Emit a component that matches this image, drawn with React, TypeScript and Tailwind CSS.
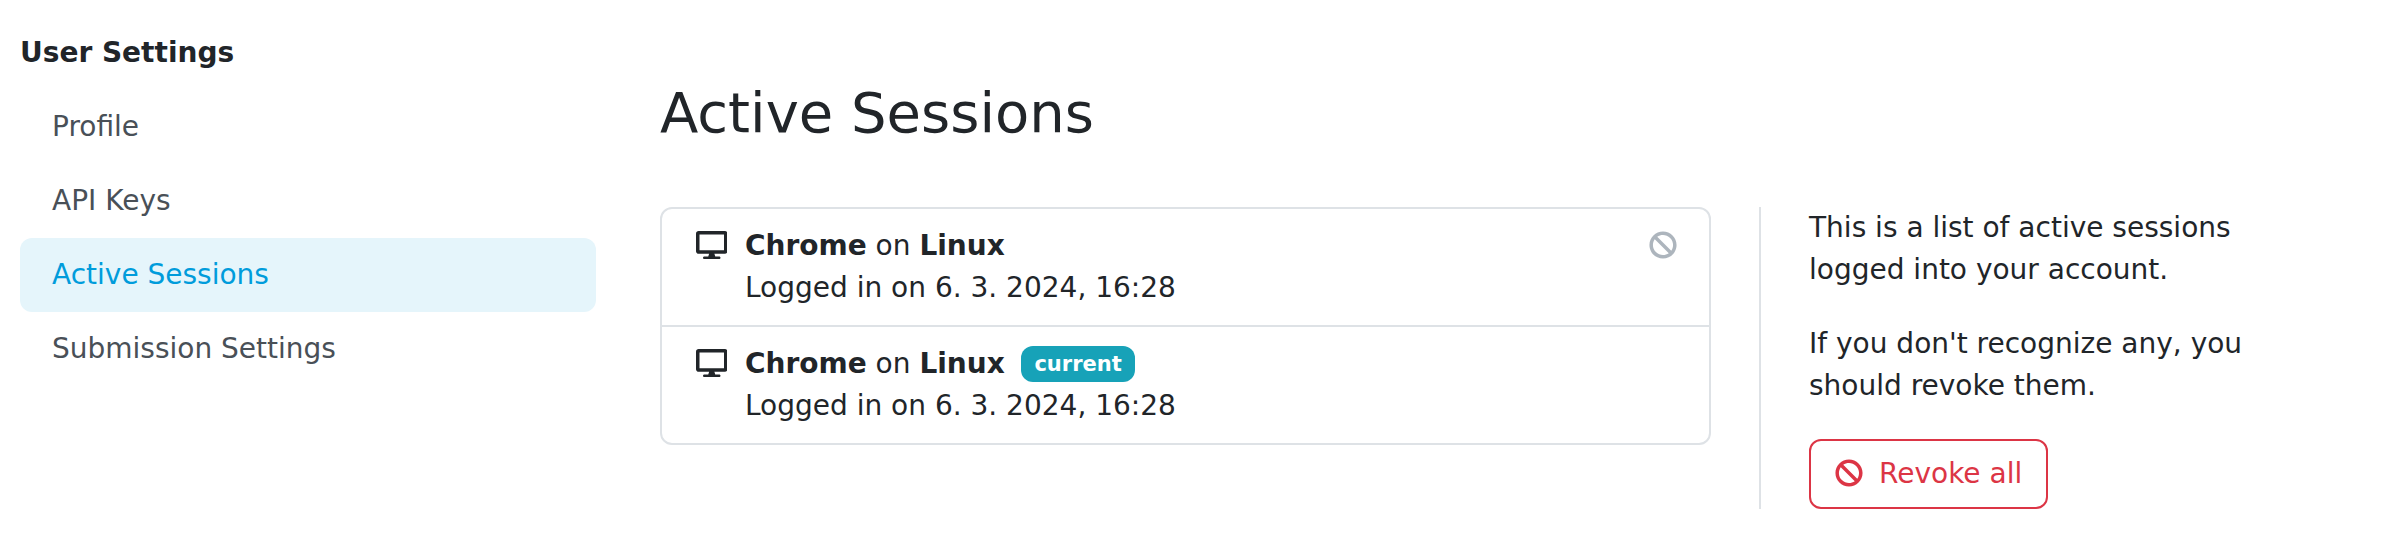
import React from "react";
import { FaBan, FaDesktop } from "react-icons/fa";

function Session({ current = false }: { current?: boolean }) {
  return (
    <div className="flex px-8 py-4">
      <div className="flex w-[51px] pt-[5.5px] pl-[1.75px]">
        <FaDesktop className="h-7 w-[31.5px]" />
      </div>
      <div className="grow">
        <div className="flex h-[42px] items-center">
          <span><b>Chrome</b> on <b>Linux</b></span>
          {current && (
            <span className="ml-4 h-9 rounded-[12px] bg-[#17a2b8] px-[13.65px] pt-2 text-[21px] leading-[21px] font-bold text-white">current</span>
          )}
        </div>
        <div>Logged in on 6. 3. 2024, 16:28</div>
      </div>
      {!current && <FaBan className="mt-[5.5px] size-7 text-[#adb5bd]" />}
    </div>
  );
}

const items = ["Profile", "API Keys", "Active Sessions", "Submission Settings"];

export default function App() {
  return (
    <div className="flex h-[549px] overflow-hidden bg-white font-['DejaVu_Sans',sans-serif] text-[28px] leading-[42px] text-[#212529]">
      <nav className="ml-5 w-[576px] pt-4">
        <h2 className="h-[74px] py-4 font-bold">User Settings</h2>
        {items.map((t) => (
          <a key={t} className={t === "Active Sessions" ? "block rounded-[12px] bg-[#e5f5fb] px-8 py-4 text-[#009cdb]" : "block px-8 py-4 text-[#495057]"}>{t}</a>
        ))}
      </nav>
      <main className="ml-16 w-[1051px] pt-[79px]">
        <h1 className="mb-[61px] text-[56px] leading-[67px]">Active Sessions</h1>
        <section className="rounded-[12px] border-2 border-[#dee2e6]">
          <Session />
          <div className="border-t-2 border-[#dee2e6]"><Session current /></div>
        </section>
      </main>
      <aside className="mt-[207px] ml-12 h-[302px] w-[560px] border-l-2 border-[#dee2e6] pl-12">
        <p className="mb-8">This is a list of active sessions<br />logged into your account.</p>
        <p className="mb-8">If you don't recognize any, you<br />should revoke them.</p>
        <button className="flex h-[70px] items-center gap-4 rounded-[12px] border-2 border-[#dc3545] px-6 text-[#dc3545]">
          <FaBan className="-mt-[3px] size-7" />
          Revoke all
        </button>
      </aside>
    </div>
  );
}
